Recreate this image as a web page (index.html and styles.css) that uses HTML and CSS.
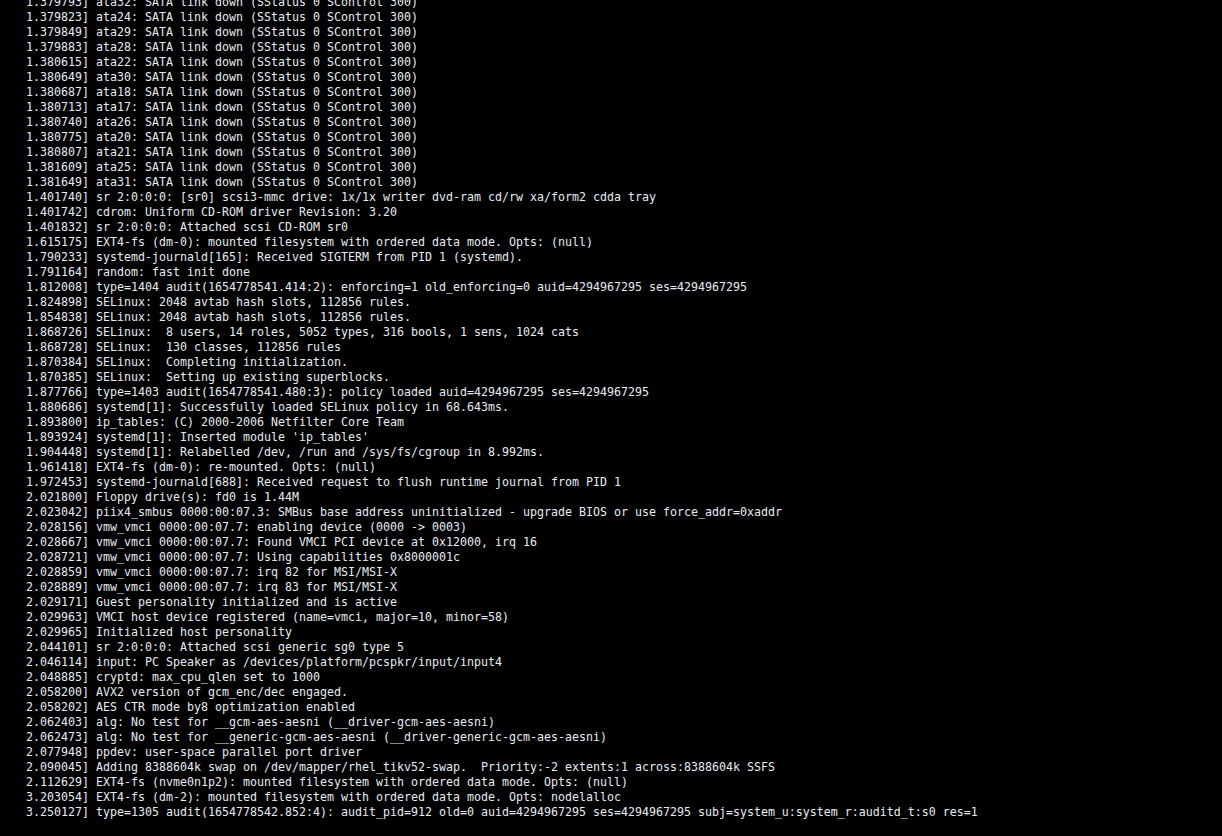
FILE: index.html
```html
<!DOCTYPE html>
<html>
<head>
<meta charset="utf-8">
<link rel="stylesheet" href="styles.css">
</head>
<body>
<pre class="console">1.379793] ata32: SATA link down (SStatus 0 SControl 300)
1.379823] ata24: SATA link down (SStatus 0 SControl 300)
1.379849] ata29: SATA link down (SStatus 0 SControl 300)
1.379883] ata28: SATA link down (SStatus 0 SControl 300)
1.380615] ata22: SATA link down (SStatus 0 SControl 300)
1.380649] ata30: SATA link down (SStatus 0 SControl 300)
1.380687] ata18: SATA link down (SStatus 0 SControl 300)
1.380713] ata17: SATA link down (SStatus 0 SControl 300)
1.380740] ata26: SATA link down (SStatus 0 SControl 300)
1.380775] ata20: SATA link down (SStatus 0 SControl 300)
1.380807] ata21: SATA link down (SStatus 0 SControl 300)
1.381609] ata25: SATA link down (SStatus 0 SControl 300)
1.381649] ata31: SATA link down (SStatus 0 SControl 300)
1.401740] sr 2:0:0:0: [sr0] scsi3-mmc drive: 1x/1x writer dvd-ram cd/rw xa/form2 cdda tray
1.401742] cdrom: Uniform CD-ROM driver Revision: 3.20
1.401832] sr 2:0:0:0: Attached scsi CD-ROM sr0
1.615175] EXT4-fs (dm-0): mounted filesystem with ordered data mode. Opts: (null)
1.790233] systemd-journald[165]: Received SIGTERM from PID 1 (systemd).
1.791164] random: fast init done
1.812008] type=1404 audit(1654778541.414:2): enforcing=1 old_enforcing=0 auid=4294967295 ses=4294967295
1.824898] SELinux: 2048 avtab hash slots, 112856 rules.
1.854838] SELinux: 2048 avtab hash slots, 112856 rules.
1.868726] SELinux:  8 users, 14 roles, 5052 types, 316 bools, 1 sens, 1024 cats
1.868728] SELinux:  130 classes, 112856 rules
1.870384] SELinux:  Completing initialization.
1.870385] SELinux:  Setting up existing superblocks.
1.877766] type=1403 audit(1654778541.480:3): policy loaded auid=4294967295 ses=4294967295
1.880686] systemd[1]: Successfully loaded SELinux policy in 68.643ms.
1.893800] ip_tables: (C) 2000-2006 Netfilter Core Team
1.893924] systemd[1]: Inserted module 'ip_tables'
1.904448] systemd[1]: Relabelled /dev, /run and /sys/fs/cgroup in 8.992ms.
1.961418] EXT4-fs (dm-0): re-mounted. Opts: (null)
1.972453] systemd-journald[688]: Received request to flush runtime journal from PID 1
2.021800] Floppy drive(s): fd0 is 1.44M
2.023042] piix4_smbus 0000:00:07.3: SMBus base address uninitialized - upgrade BIOS or use force_addr=0xaddr
2.028156] vmw_vmci 0000:00:07.7: enabling device (0000 -&gt; 0003)
2.028667] vmw_vmci 0000:00:07.7: Found VMCI PCI device at 0x12000, irq 16
2.028721] vmw_vmci 0000:00:07.7: Using capabilities 0x8000001c
2.028859] vmw_vmci 0000:00:07.7: irq 82 for MSI/MSI-X
2.028889] vmw_vmci 0000:00:07.7: irq 83 for MSI/MSI-X
2.029171] Guest personality initialized and is active
2.029963] VMCI host device registered (name=vmci, major=10, minor=58)
2.029965] Initialized host personality
2.044101] sr 2:0:0:0: Attached scsi generic sg0 type 5
2.046114] input: PC Speaker as /devices/platform/pcspkr/input/input4
2.048885] cryptd: max_cpu_qlen set to 1000
2.058200] AVX2 version of gcm_enc/dec engaged.
2.058202] AES CTR mode by8 optimization enabled
2.062403] alg: No test for __gcm-aes-aesni (__driver-gcm-aes-aesni)
2.062473] alg: No test for __generic-gcm-aes-aesni (__driver-generic-gcm-aes-aesni)
2.077948] ppdev: user-space parallel port driver
2.090045] Adding 8388604k swap on /dev/mapper/rhel_tikv52-swap.  Priority:-2 extents:1 across:8388604k SSFS
2.112629] EXT4-fs (nvme0n1p2): mounted filesystem with ordered data mode. Opts: (null)
3.203054] EXT4-fs (dm-2): mounted filesystem with ordered data mode. Opts: nodelalloc
3.250127] type=1305 audit(1654778542.852:4): audit_pid=912 old=0 auid=4294967295 ses=4294967295 subj=system_u:system_r:auditd_t:s0 res=1</pre>
</body>
</html>
```
FILE: styles.css
```css
html, body {
  margin: 0;
  padding: 0;
  background: #000000;
  height: 100%;
  overflow: hidden;
}
.console {
  margin: -5px 0 0 0;
  padding: 0 0 0 26px;
  color: #e6ecf2;
  font-family: "DejaVu Sans Mono", "Liberation Mono", monospace;
  font-size: 11.63px;
  line-height: 15px;
  white-space: pre;
}
```
